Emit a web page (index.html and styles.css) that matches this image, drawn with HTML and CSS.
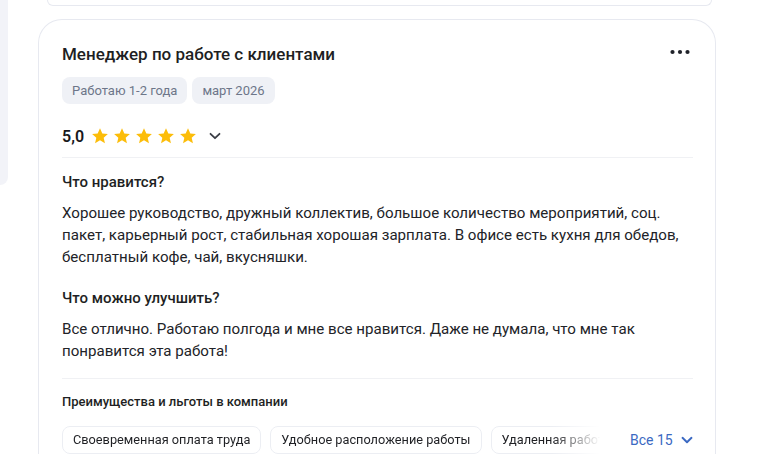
FILE: index.html
```html
<!DOCTYPE html>
<html lang="ru">
<head>
<meta charset="utf-8">
<link rel="stylesheet" href="styles.css">
</head>
<body>
<div class="page">
  <aside class="side"></aside>
  <main class="feed">
    <div class="prev-card"></div>
    <article class="card">
      <header class="card-head">
        <h2 class="title">Менеджер по работе с клиентами</h2>
        <button class="more" aria-label="Ещё">
          <svg width="20" height="6" viewBox="0 0 20 6"><circle cx="2.5" cy="3" r="2.1" fill="#1f2229"/><circle cx="10" cy="3" r="2.1" fill="#1f2229"/><circle cx="17.5" cy="3" r="2.1" fill="#1f2229"/></svg>
        </button>
      </header>
      <div class="tags">
        <span class="tag">Работаю 1-2 года</span>
        <span class="tag">март 2026</span>
      </div>
      <div class="rating">
        <span class="score">5,0</span>
        <span class="stars">
          <svg class="star" viewBox="0 0 24 24"><path d="M12 1.5l3.1 7 7.4.7-5.6 5 1.7 7.4L12 17.8l-6.6 3.8 1.7-7.4-5.6-5 7.4-.7z"/></svg>
          <svg class="star" viewBox="0 0 24 24"><path d="M12 1.5l3.1 7 7.4.7-5.6 5 1.7 7.4L12 17.8l-6.6 3.8 1.7-7.4-5.6-5 7.4-.7z"/></svg>
          <svg class="star" viewBox="0 0 24 24"><path d="M12 1.5l3.1 7 7.4.7-5.6 5 1.7 7.4L12 17.8l-6.6 3.8 1.7-7.4-5.6-5 7.4-.7z"/></svg>
          <svg class="star" viewBox="0 0 24 24"><path d="M12 1.5l3.1 7 7.4.7-5.6 5 1.7 7.4L12 17.8l-6.6 3.8 1.7-7.4-5.6-5 7.4-.7z"/></svg>
          <svg class="star" viewBox="0 0 24 24"><path d="M12 1.5l3.1 7 7.4.7-5.6 5 1.7 7.4L12 17.8l-6.6 3.8 1.7-7.4-5.6-5 7.4-.7z"/></svg>
        </span>
        <svg class="chev" width="12" height="8" viewBox="0 0 12 8"><path d="M1.5 1.8L6 6.2l4.5-4.4" fill="none" stroke="#3a3d45" stroke-width="1.8" stroke-linecap="round" stroke-linejoin="round"/></svg>
      </div>
      <hr class="divider first">
      <h3 class="q">Что нравится?</h3>
      <p class="answer">Хорошее руководство, дружный коллектив, большое количество мероприятий, соц. пакет, карьерный рост, стабильная хорошая зарплата. В офисе есть кухня для обедов, бесплатный кофе, чай, вкусняшки.</p>
      <h3 class="q q2">Что можно улучшить?</h3>
      <p class="answer">Все отлично. Работаю полгода и мне все нравится. Даже не думала, что мне так понравится эта работа!</p>
      <hr class="divider second">
      <h4 class="benefits-title">Преимущества и льготы в компании</h4>
      <div class="benefits">
        <div class="chips">
          <span class="chip">Своевременная оплата труда</span>
          <span class="chip">Удобное расположение работы</span>
          <span class="chip">Удаленная работа</span>
        </div>
        <a class="all" href="#">Все 15
          <svg width="12" height="8" viewBox="0 0 12 8"><path d="M1.5 1.8L6 6.2l4.5-4.4" fill="none" stroke="#3b69c2" stroke-width="1.9" stroke-linecap="round" stroke-linejoin="round"/></svg>
        </a>
      </div>
    </article>
  </main>
</div>
</body>
</html>
```

FILE: styles.css
```css
* { box-sizing: border-box; }
html, body { margin: 0; padding: 0; background: #ffffff; }
body {
  font-family: Roboto, "Liberation Sans", Arial, sans-serif;
  color: #1f2024;
  width: 768px;
  height: 454px;
  overflow: hidden;
}
.page {
  display: flex;
  align-items: flex-start;
  height: 454px;
  overflow: hidden;
}
.side {
  width: 8px;
  height: 185px;
  flex: 0 0 8px;
  background: #f2f3f8;
  border-bottom-right-radius: 10px;
}
.feed {
  margin-left: 30px;
  width: 678px;
  display: flex;
  flex-direction: column;
}
.prev-card {
  height: 6px;
  margin: 0 4px 0 9px;
  border: 1px solid #e7e9f0;
  border-top: none;
  border-radius: 0 0 22px 22px;
}
.card {
  margin-top: 13px;
  border: 1px solid #e7e9f0;
  border-bottom: none;
  border-radius: 24px 24px 0 0;
  padding: 24px 22px 0 23px;
  height: 435px;
}
.card-head {
  display: flex;
  align-items: center;
  justify-content: space-between;
}
.title {
  margin: 0;
  font-size: 17px;
  line-height: 20px;
  font-weight: 500;
  color: #1e1f23;
}
.more {
  border: 0;
  background: none;
  padding: 0;
  margin-right: 3px;
  margin-top: -4px;
  display: flex;
}
.tags {
  display: flex;
  gap: 5px;
  margin-top: 13px;
}
.tag {
  background: #eff1f6;
  color: #6d7689;
  font-size: 13px;
  line-height: 27px;
  height: 27px;
  padding: 0 10px;
  border-radius: 8px;
}
.rating {
  display: flex;
  align-items: center;
  height: 24px;
  margin-top: 20px;
}
.score {
  font-size: 16px;
  font-weight: 600;
  color: #17181c;
  width: 29px;
}
.stars {
  display: flex;
  gap: 4px;
}
.star {
  width: 18px;
  height: 18px;
  fill: #fcbd0a;
}
.chev {
  margin-left: 12px;
}
.divider {
  border: 0;
  height: 1px;
  background: #f0f1f4;
  margin: 0;
}
.divider.first { margin-top: 9px; }
.q {
  margin: 14px 0 0;
  font-size: 15px;
  line-height: 20px;
  font-weight: 500;
  color: #1e1f23;
}
.q2 { margin-top: 20px; }
.answer {
  margin: 10px 0 0;
  font-size: 15.1px;
  line-height: 22px;
  color: #222328;
}
.divider.second { margin-top: 16px; }
.benefits-title {
  margin: 14px 0 0;
  font-size: 13px;
  line-height: 18px;
  font-weight: 500;
  color: #1e1f23;
}
.benefits {
  display: flex;
  align-items: center;
  margin-top: 15px;
}
.chips {
  display: flex;
  gap: 9px;
  width: 538px;
  flex: 0 0 538px;
  overflow: hidden;
  -webkit-mask-image: linear-gradient(to right, #000 490px, transparent 538px);
  mask-image: linear-gradient(to right, #000 490px, transparent 538px);
}
.chip {
  flex: 0 0 auto;
  height: 28px;
  line-height: 26px;
  padding: 0 10px;
  border: 1px solid #eceef3;
  border-radius: 8px;
  font-size: 12.75px;
  color: #1f2024;
  white-space: nowrap;
}
.all {
  margin-left: 30px;
  display: flex;
  align-items: center;
  gap: 8px;
  color: #3b69c2;
  font-size: 14px;
  text-decoration: none;
}
```
